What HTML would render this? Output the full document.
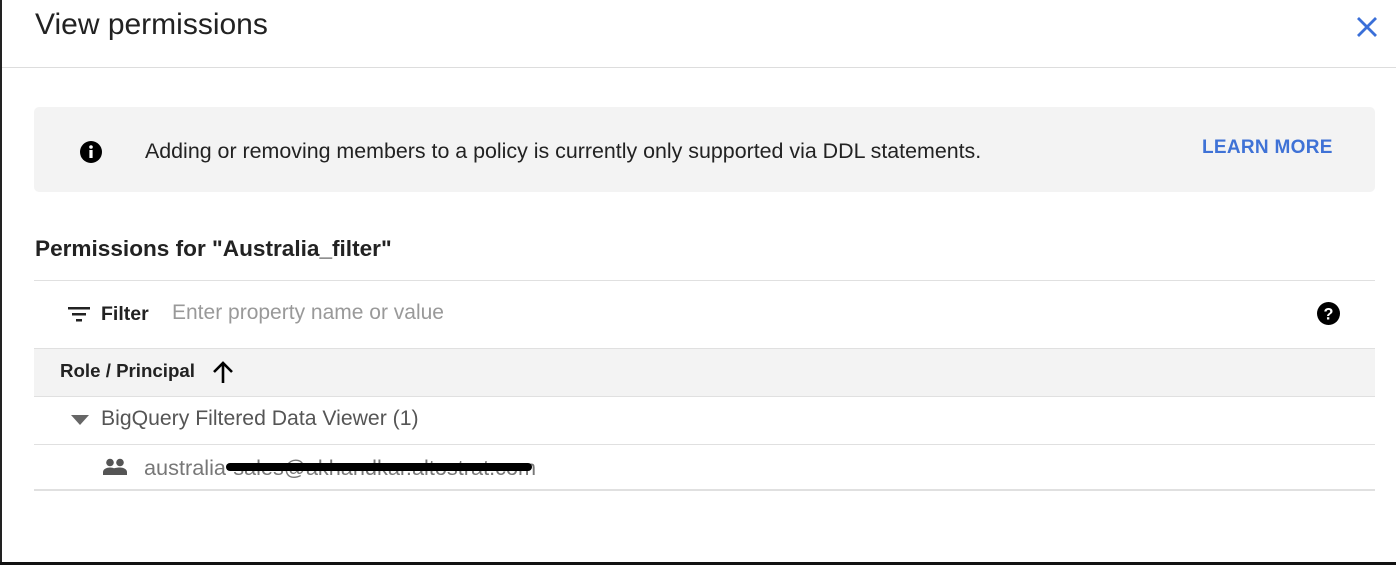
<!DOCTYPE html>
<html><head><meta charset="utf-8"><style>
*{margin:0;padding:0;box-sizing:border-box}
body{width:1396px;height:565px;background:#fff;font-family:"Liberation Sans",Arial,sans-serif;position:relative;overflow:hidden;color:#202124}
.abs{position:absolute;white-space:nowrap}
.hl{position:absolute;left:34px;width:1341px;height:1px;background:#e0e0e0}
</style></head><body>
<div class="abs" style="left:0;top:0;width:2px;height:565px;background:#222"></div>
<div class="abs" style="left:0;top:562px;width:1396px;height:3px;background:#111"></div>
<div class="abs" style="left:35px;top:8px;font-size:30px;color:#222">View permissions</div>
<svg class="abs" style="left:1355px;top:15px" width="24" height="24" viewBox="0 0 24 24"><path d="M3 3L21 21M21 3L3 21" stroke="#3a6fd8" stroke-width="2.8"/></svg>
<div class="abs" style="left:2px;top:67px;width:1394px;height:1px;background:#ddd"></div>
<div class="abs" style="left:34px;top:107px;width:1341px;height:85px;background:#f3f3f3;border-radius:5px"></div>
<svg class="abs" style="left:80px;top:141px" width="22" height="22" viewBox="0 0 22 22"><circle cx="11" cy="11" r="11" fill="#000"/><rect x="9.4" y="9" width="3.2" height="8" fill="#fff"/><circle cx="11" cy="6" r="1.8" fill="#fff"/></svg>
<div class="abs" style="left:145px;top:139px;font-size:21.4px;color:#222">Adding or removing members to a policy is currently only supported via DDL statements.</div>
<div class="abs" style="left:1202px;top:137px;font-size:19px;color:#3f72d6;font-weight:bold;letter-spacing:0.3px">LEARN MORE</div>
<div class="abs" style="left:35px;top:236px;font-size:22.6px;font-weight:bold;color:#222">Permissions for "Australia_filter"</div>
<div class="hl" style="top:280px"></div>
<svg class="abs" style="left:68px;top:305px" width="22" height="18" viewBox="0 0 22 18"><rect x="0" y="2" width="22" height="2.5" fill="#222"/><rect x="4" y="8" width="14" height="2.5" fill="#222"/><rect x="8" y="14" width="6" height="2.5" fill="#222"/></svg>
<div class="abs" style="left:101px;top:303px;font-size:19.5px;font-weight:bold;color:#222">Filter</div>
<div class="abs" style="left:172px;top:301px;font-size:21px;color:#999">Enter property name or value</div>
<svg class="abs" style="left:1317px;top:302px" width="23" height="23" viewBox="0 0 24 24"><circle cx="12" cy="12" r="12" fill="#000"/><text x="12" y="18.5" text-anchor="middle" font-family="Liberation Sans" font-weight="bold" font-size="17" fill="#fff">?</text></svg>
<div class="abs" style="left:34px;top:348px;width:1341px;height:48px;background:#f3f3f3;border-top:1px solid #e0e0e0"></div>
<div class="abs" style="left:60px;top:360px;font-size:18.7px;font-weight:bold;color:#222">Role / Principal</div>
<svg class="abs" style="left:212px;top:360px" width="22" height="24" viewBox="0 0 22 24"><path d="M11 23V3M2 12L11 3L20 12" stroke="#000" stroke-width="2.6" fill="none"/></svg>
<div class="hl" style="top:396px"></div>
<svg class="abs" style="left:71px;top:415px" width="18" height="10" viewBox="0 0 18 10"><path d="M0 0H18L9 10Z" fill="#666"/></svg>
<div class="abs" style="left:101px;top:407px;font-size:21.2px;color:#555">BigQuery Filtered Data Viewer (1)</div>
<div class="hl" style="top:444px"></div>
<svg class="abs" style="left:103px;top:458px" width="24" height="18" viewBox="0 0 24 18"><circle cx="7" cy="4.5" r="3.8" fill="#555"/><circle cx="17" cy="4.5" r="3.8" fill="#555"/><path d="M0 17v-3c0-3 4-4.5 7-4.5s7 1.5 7 4.5v3Z" fill="#555"/><path d="M12 17v-3c0-1.5-.5-2.5-1.5-3.5 2-.8 4.5-1 6.5-1 3 0 7 1.5 7 4.5v3Z" fill="#555"/></svg>
<div class="abs" style="left:144px;top:455px;font-size:21.7px;color:#777">australia-sales@akhandkar.altostrat.com</div>
<div class="abs" style="left:226px;top:463px;width:306px;height:8px;background:#000;border-radius:4px"></div>
<div class="abs" style="left:34px;top:489px;width:1341px;height:2px;background:#e0e0e0"></div>
</body></html>
